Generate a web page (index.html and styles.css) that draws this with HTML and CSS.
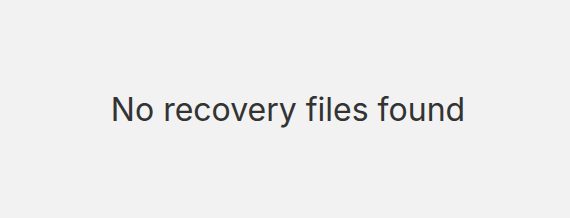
FILE: index.html
```html
<!DOCTYPE html>
<html lang="en">
<head>
    <meta charset="UTF-8">
    <title>Recovery</title>
    <link rel="stylesheet" href="styles.css">
</head>
<body>
    <div class="empty-state">
        <p class="empty-text">No recovery files found</p>
    </div>
</body>
</html>
```

FILE: styles.css
```css
body {
    margin: 0;
    background-color: #f2f2f2;
    font-family: Inter, "Noto Sans", sans-serif;
}

.empty-state {
    height: 218px;
    padding-left: 6px;
    box-sizing: border-box;
    display: flex;
    align-items: center;
    justify-content: center;
}

.empty-text {
    margin: 0;
    font-size: 32px;
    color: #333333;
}
```
